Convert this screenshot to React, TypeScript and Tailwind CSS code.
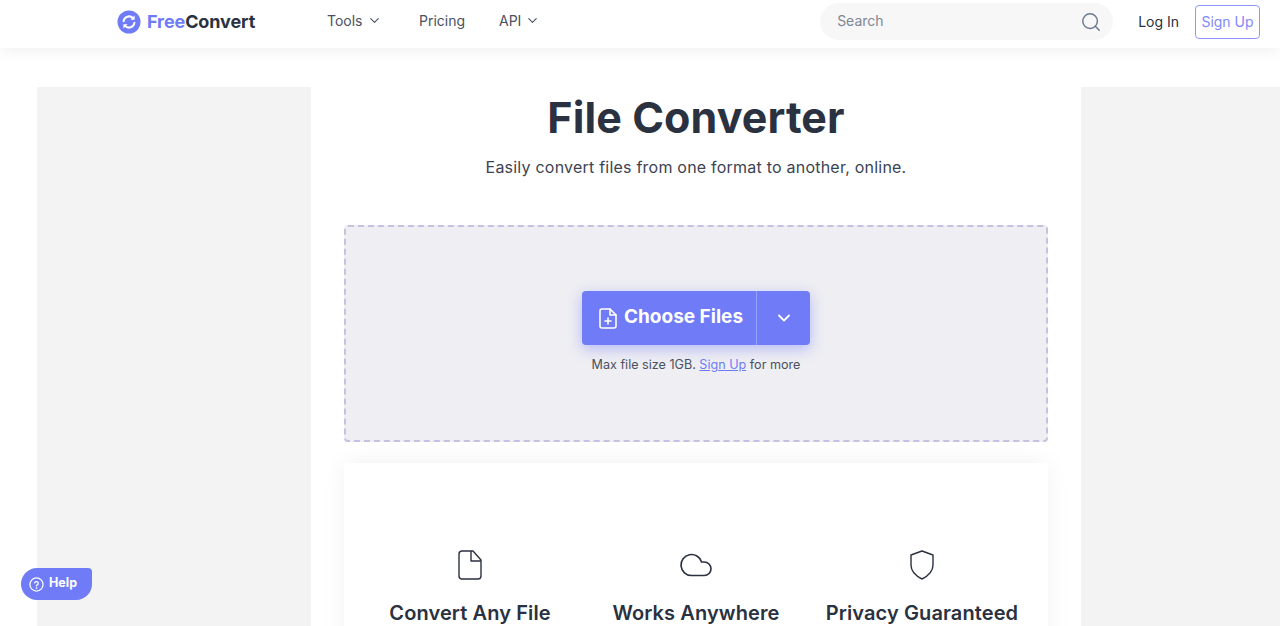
import { ChevronDown, Search, Cloud } from "lucide-react";

const font = { fontFamily: "Inter, 'Noto Sans', sans-serif" };

function Logo() {
  return (
    <svg width="24" height="24" viewBox="0 0 24 24" className="shrink-0">
      <circle cx="12" cy="12" r="11.5" fill="#6f7bf7" />
      <path d="M6.6 11.2a5.5 5.5 0 0 1 9.4-3.1" fill="none" stroke="#fff" strokeWidth="2" strokeLinecap="round" />
      <path d="M17.4 12.8a5.5 5.5 0 0 1-9.4 3.1" fill="none" stroke="#fff" strokeWidth="2" strokeLinecap="round" />
      <path d="M17.6 5.6v4.2h-4.2z" fill="#fff" />
      <path d="M6.4 18.4v-4.2h4.2z" fill="#fff" />
    </svg>
  );
}

function FilePlusIcon() {
  return (
    <svg width="18" height="21" viewBox="0 0 18 21" fill="none" stroke="#fff" strokeWidth="1.6" strokeLinejoin="round" strokeLinecap="round">
      <path d="M3 1h8l6 6v11a2 2 0 0 1-2 2H3a2 2 0 0 1-2-2V3a2 2 0 0 1 2-2z" />
      <path d="M11 1v6h6" />
      <path d="M9 10v6M6 13h6" />
    </svg>
  );
}

function FileIcon() {
  return (
    <svg width="24" height="30" viewBox="0 0 24 30" fill="none" stroke="#2a3140" strokeWidth="1.4" strokeLinejoin="round">
      <path d="M3.5 1h11.5l8 9v16a3 3 0 0 1-3 3H3.500a3 3 0 0 1-2.500-3V4a3 3 0 0 1 2.500-3z" />
      <path d="M13 1v10h10" />
    </svg>
  );
}

function ShieldIcon() {
  return (
    <svg width="24" height="30" viewBox="0 0 24 30" fill="none" stroke="#2a3140" strokeWidth="1.4" strokeLinejoin="round">
      <path d="M12 1l11 4v10c0 6-4 10.500-11 14C5 25.500 1 21 1 15V5z" />
    </svg>
  );
}

const features = [
  { title: "Convert Any File", icon: <FileIcon /> },
  { title: "Works Anywhere", icon: <Cloud size={36} strokeWidth={1.1} color="#2a3140" /> },
  { title: "Privacy Guaranteed", icon: <ShieldIcon /> },
];

export default function App() {
  return (
    <div className="relative h-[626px] overflow-hidden bg-white" style={font}>
      {/* Header */}
      <header className="relative z-10 flex h-12 items-center bg-white pb-[5px] pl-[117px] pr-5 shadow-[0_2px_14px_rgba(0,0,0,0.07)]">
        <div className="flex w-[210px] items-center gap-[6px]">
          <Logo />
          <span className="text-[18px] font-bold tracking-[-0.1px] text-[#2a3140]">
            <span className="text-[#6f7bf7]">Free</span>Convert
          </span>
        </div>
        <nav className="flex items-center pb-[2px] text-sm text-[#4a5160]">
          <span className="flex w-[92px] items-center gap-[4px]">
            Tools <ChevronDown size={15} strokeWidth={1.8} />
          </span>
          <span className="w-[80px]">Pricing</span>
          <span className="flex items-center gap-[4px]">
            API <ChevronDown size={15} strokeWidth={1.8} />
          </span>
        </nav>
        <div className="ml-auto flex h-[37px] w-[293px] items-center justify-between rounded-full bg-[#f7f7f7] pl-[17px] pr-[11px]">
          <span className="pb-[2px] text-sm text-[#7f8694]">Search</span>
          <Search size={22} strokeWidth={1.6} color="#6b7a90" />
        </div>
        <span className="ml-[25px] text-sm text-[#2a3140]">Log In</span>
        <span className="ml-4 flex h-[34px] w-[65px] items-center justify-center rounded border border-[#8f97fa] text-sm text-[#7f88f8]">
          Sign Up
        </span>
      </header>

      {/* Body */}
      <main className="grid grid-cols-[274px_770px_1fr] pl-[37px] pt-[39px]">
        <div className="h-[560px] bg-[#f3f3f3]" />
        <section className="flex flex-col items-center px-[33px]">
          <h1 className="mt-[4px] text-[43px] leading-[52px] font-bold tracking-[0.1px] text-[#2a3140]">File Converter</h1>
          <p className="mt-[12px] text-base leading-6 tracking-[0.22px] text-[#3c4352]">
            Easily convert files from one format to another, online.
          </p>

          <div className="mt-[46px] flex h-[217px] w-[704px] flex-col items-center rounded border-2 border-dashed border-[#c5c1e0] bg-[#eeeef3] pt-[64px]">
            <div className="flex h-[54px] w-[228px] rounded bg-[#6f7bf7] text-white shadow-[0_4px_14px_rgba(111,123,247,0.45)]">
              <div className="flex w-[175px] items-center justify-center gap-[7px] border-r border-[#98a1fa] pl-[4px]">
                <FilePlusIcon />
                <span className="pb-[2px] text-[19px] font-bold">Choose Files</span>
              </div>
              <div className="flex flex-1 items-center justify-center">
                <ChevronDown size={20} strokeWidth={2.2} />
              </div>
            </div>
            <p className="mt-[11px] text-[12.6px] leading-[18px] text-[#4a5160]">
              Max file size 1GB. <span className="text-[#6f7bf7] underline">Sign Up</span> for more
            </p>
          </div>

          <div className="mt-[21px] grid h-[300px] w-[704px] grid-cols-3 items-start rounded bg-white px-[13px] pt-[87px] shadow-[0_0_24px_rgba(0,0,0,0.06)]">
            {features.map((f) => (
              <div key={f.title} className="flex flex-col items-center">
                <div className="flex h-[30px] items-center">{f.icon}</div>
                <h3 className="mt-[19px] whitespace-nowrap text-xl leading-7 font-semibold tracking-[0.1px] text-[#2a3140]">{f.title}</h3>
              </div>
            ))}
          </div>
        </section>
        <div className="h-[560px] bg-[#f3f3f3]" />
      </main>

      {/* Help button */}
      <div className="absolute bottom-[26px] left-[21px] flex h-[32px] w-[71px] items-center gap-[5px] rounded-[16px_4px_16px_16px] bg-[#6f7bf7] pl-2 text-white">
        <svg width="15" height="15" viewBox="0 0 24 24" fill="none" stroke="#fff" strokeWidth="2" strokeLinecap="round">
          <circle cx="12" cy="12" r="10.500" />
          <path d="M9 9.300a3 3 0 0 1 5.800 1c0 2-2.800 2.300-2.800 4" />
          <circle cx="12" cy="17.800" r="0.400" />
        </svg>
        <span className="pb-[2px] text-[12.500px] font-bold">Help</span>
      </div>
    </div>
  );
}
